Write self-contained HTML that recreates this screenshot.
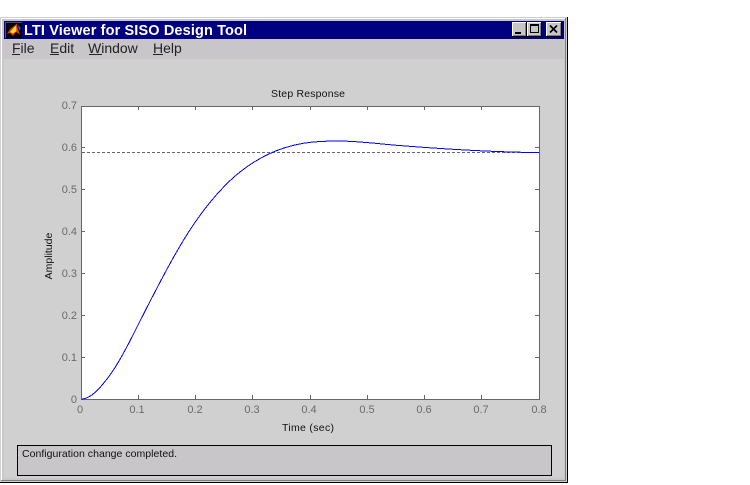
<!DOCTYPE html>
<html><head><meta charset="utf-8"><style>
html,body{margin:0;padding:0;background:#fff;width:750px;height:485px;overflow:hidden}
svg{display:block;font-family:"Liberation Sans",Arial,sans-serif}
.t{font-size:11px;fill:#6a6a6a}
.m{font-size:14px;fill:#222}
.c{font-size:10.5px;fill:#111}
</style></head><body>
<svg width="750" height="485" viewBox="0 0 750 485" xmlns="http://www.w3.org/2000/svg">
<g shape-rendering="crispEdges">
<rect x="0" y="17" width="568" height="466" fill="#000"/>
<rect x="0" y="17" width="567" height="465" fill="#d0d0d0"/>
<rect x="1" y="18" width="565" height="463" fill="#808080"/>
<rect x="1" y="18" width="564" height="462" fill="#fff"/>
<rect x="2" y="19" width="563" height="461" fill="#c8c6c8"/>
<rect x="4" y="21" width="560" height="18" fill="#000080"/>
<rect x="4" y="39" width="560" height="20" fill="#c8c6c8"/>
<rect x="4" y="59" width="560" height="419" fill="#d0d0d0"/>
<!-- title icon -->
<rect x="5" y="22" width="17" height="16" fill="#000"/>
<rect x="5" y="22" width="17" height="1" fill="#555"/>
<rect x="5" y="22" width="1" height="16" fill="#555"/>
</g>
<path d="M7 34 L10 29 L14 26 L17 23.5 L18 29 L20 35 L16 32 L13 36 L10 33 Z" fill="#e83010"/>
<path d="M10 32 L13 28.5 L16 25.5 L16.5 31 L13 33.5 Z" fill="#ffe030"/>
<path d="M18 25 L21 28 L19 31 Z" fill="#3050d0"/>
<text x="24" y="35" font-size="14.5" font-weight="bold" fill="#fff" textLength="223" lengthAdjust="spacing">LTI Viewer for SISO Design Tool</text>
<!-- buttons -->
<g shape-rendering="crispEdges">
<rect x="512" y="22" width="15" height="15" fill="#000"/>
<rect x="512" y="22" width="14" height="14" fill="#fff"/>
<rect x="513" y="23" width="13" height="13" fill="#808080"/>
<rect x="513" y="23" width="12" height="12" fill="#c8c6c8"/>
<rect x="515" y="32" width="6" height="2" fill="#000"/>
<rect x="527" y="22" width="15" height="15" fill="#000"/>
<rect x="527" y="22" width="14" height="14" fill="#fff"/>
<rect x="528" y="23" width="13" height="13" fill="#808080"/>
<rect x="528" y="23" width="12" height="12" fill="#c8c6c8"/>
<rect x="530" y="24" width="9" height="9" fill="#000"/>
<rect x="531" y="26" width="7" height="6" fill="#c8c6c8"/>
<rect x="546" y="22" width="16" height="15" fill="#000"/>
<rect x="546" y="22" width="15" height="14" fill="#fff"/>
<rect x="547" y="23" width="14" height="13" fill="#808080"/>
<rect x="547" y="23" width="13" height="12" fill="#c8c6c8"/>
</g>
<path d="M550 25.5 L557 32.5 M557 25.5 L550 32.5" stroke="#000" stroke-width="1.6" fill="none"/>
<!-- menu -->
<text x="12" y="53" class="m">File</text>
<text x="50" y="53" class="m">Edit</text>
<text x="88" y="53" class="m">Window</text>
<text x="153" y="53" class="m">Help</text>
<g shape-rendering="crispEdges" fill="#222">
<rect x="12" y="54" width="8" height="1"/>
<rect x="50" y="54" width="9" height="1"/>
<rect x="89" y="54" width="13" height="1"/>
<rect x="153" y="54" width="10" height="1"/>
</g>
<!-- axes -->
<g shape-rendering="crispEdges">
<rect x="81.5" y="106.5" width="458" height="293" fill="#fff" stroke="#666" stroke-width="1"/>
<path stroke="#666" fill="none" d="M138.5 106v4M195.5 106v4M252.5 106v4M310.5 106v4M367.5 106v4M424.5 106v4M481.5 106v4
M138.5 399v-4M195.5 399v-4M252.5 399v-4M310.5 399v-4M367.5 399v-4M424.5 399v-4M481.5 399v-4
M81 357.5h4M81 315.5h4M81 273.5h4M81 231.5h4M81 189.5h4M81 147.5h4
M539 357.5h-4M539 315.5h-4M539 273.5h-4M539 231.5h-4M539 189.5h-4M539 147.5h-4"/>
<line x1="82" y1="152.5" x2="539" y2="152.5" stroke="#666" stroke-dasharray="3 2"/>
<path fill="none" stroke="#0000ff" stroke-width="1" d="M81.5 399C90.4 399 99.4 389 108.3 377.3C120.9 360.8 133.4 333.8 146 309.3C161.2 279.6 176.5 250.1 191.7 227.3C204.5 208.1 217.2 192.9 230 180.7C242.2 169.1 254.5 161.1 266.7 155C278.9 148.9 291.1 145.4 303.3 143.3C314.9 141.4 326.4 141 338 141C357.6 141 377.1 143.7 396.7 145.3C444.1 149.1 491.6 152.1 539 152.6"/>
</g>
<!-- labels -->
<g text-anchor="end">
<text x="77" y="109" class="t">0.7</text>
<text x="77" y="151" class="t">0.6</text>
<text x="77" y="193" class="t">0.5</text>
<text x="77" y="235" class="t">0.4</text>
<text x="77" y="277" class="t">0.3</text>
<text x="77" y="319" class="t">0.2</text>
<text x="77" y="361" class="t">0.1</text>
<text x="77" y="403" class="t">0</text>
</g>
<g text-anchor="middle">
<text x="80" y="413" class="t">0</text>
<text x="137" y="413" class="t">0.1</text>
<text x="195" y="413" class="t">0.2</text>
<text x="252" y="413" class="t">0.3</text>
<text x="309" y="413" class="t">0.4</text>
<text x="367" y="413" class="t">0.5</text>
<text x="424" y="413" class="t">0.6</text>
<text x="481" y="413" class="t">0.7</text>
<text x="539" y="413" class="t">0.8</text>
<text x="308" y="97" class="c" textLength="74">Step Response</text>
<text x="308" y="431" class="c" textLength="52">Time (sec)</text>
<text transform="translate(52,256) rotate(-90)" class="c">Amplitude</text>
</g>
<!-- status -->
<rect x="17.5" y="445.5" width="534" height="30" fill="#c8c6c8" stroke="#000" stroke-width="1" shape-rendering="crispEdges"/>
<text x="22" y="457" class="c" textLength="155">Configuration change completed.</text>
</svg>
</body></html>
